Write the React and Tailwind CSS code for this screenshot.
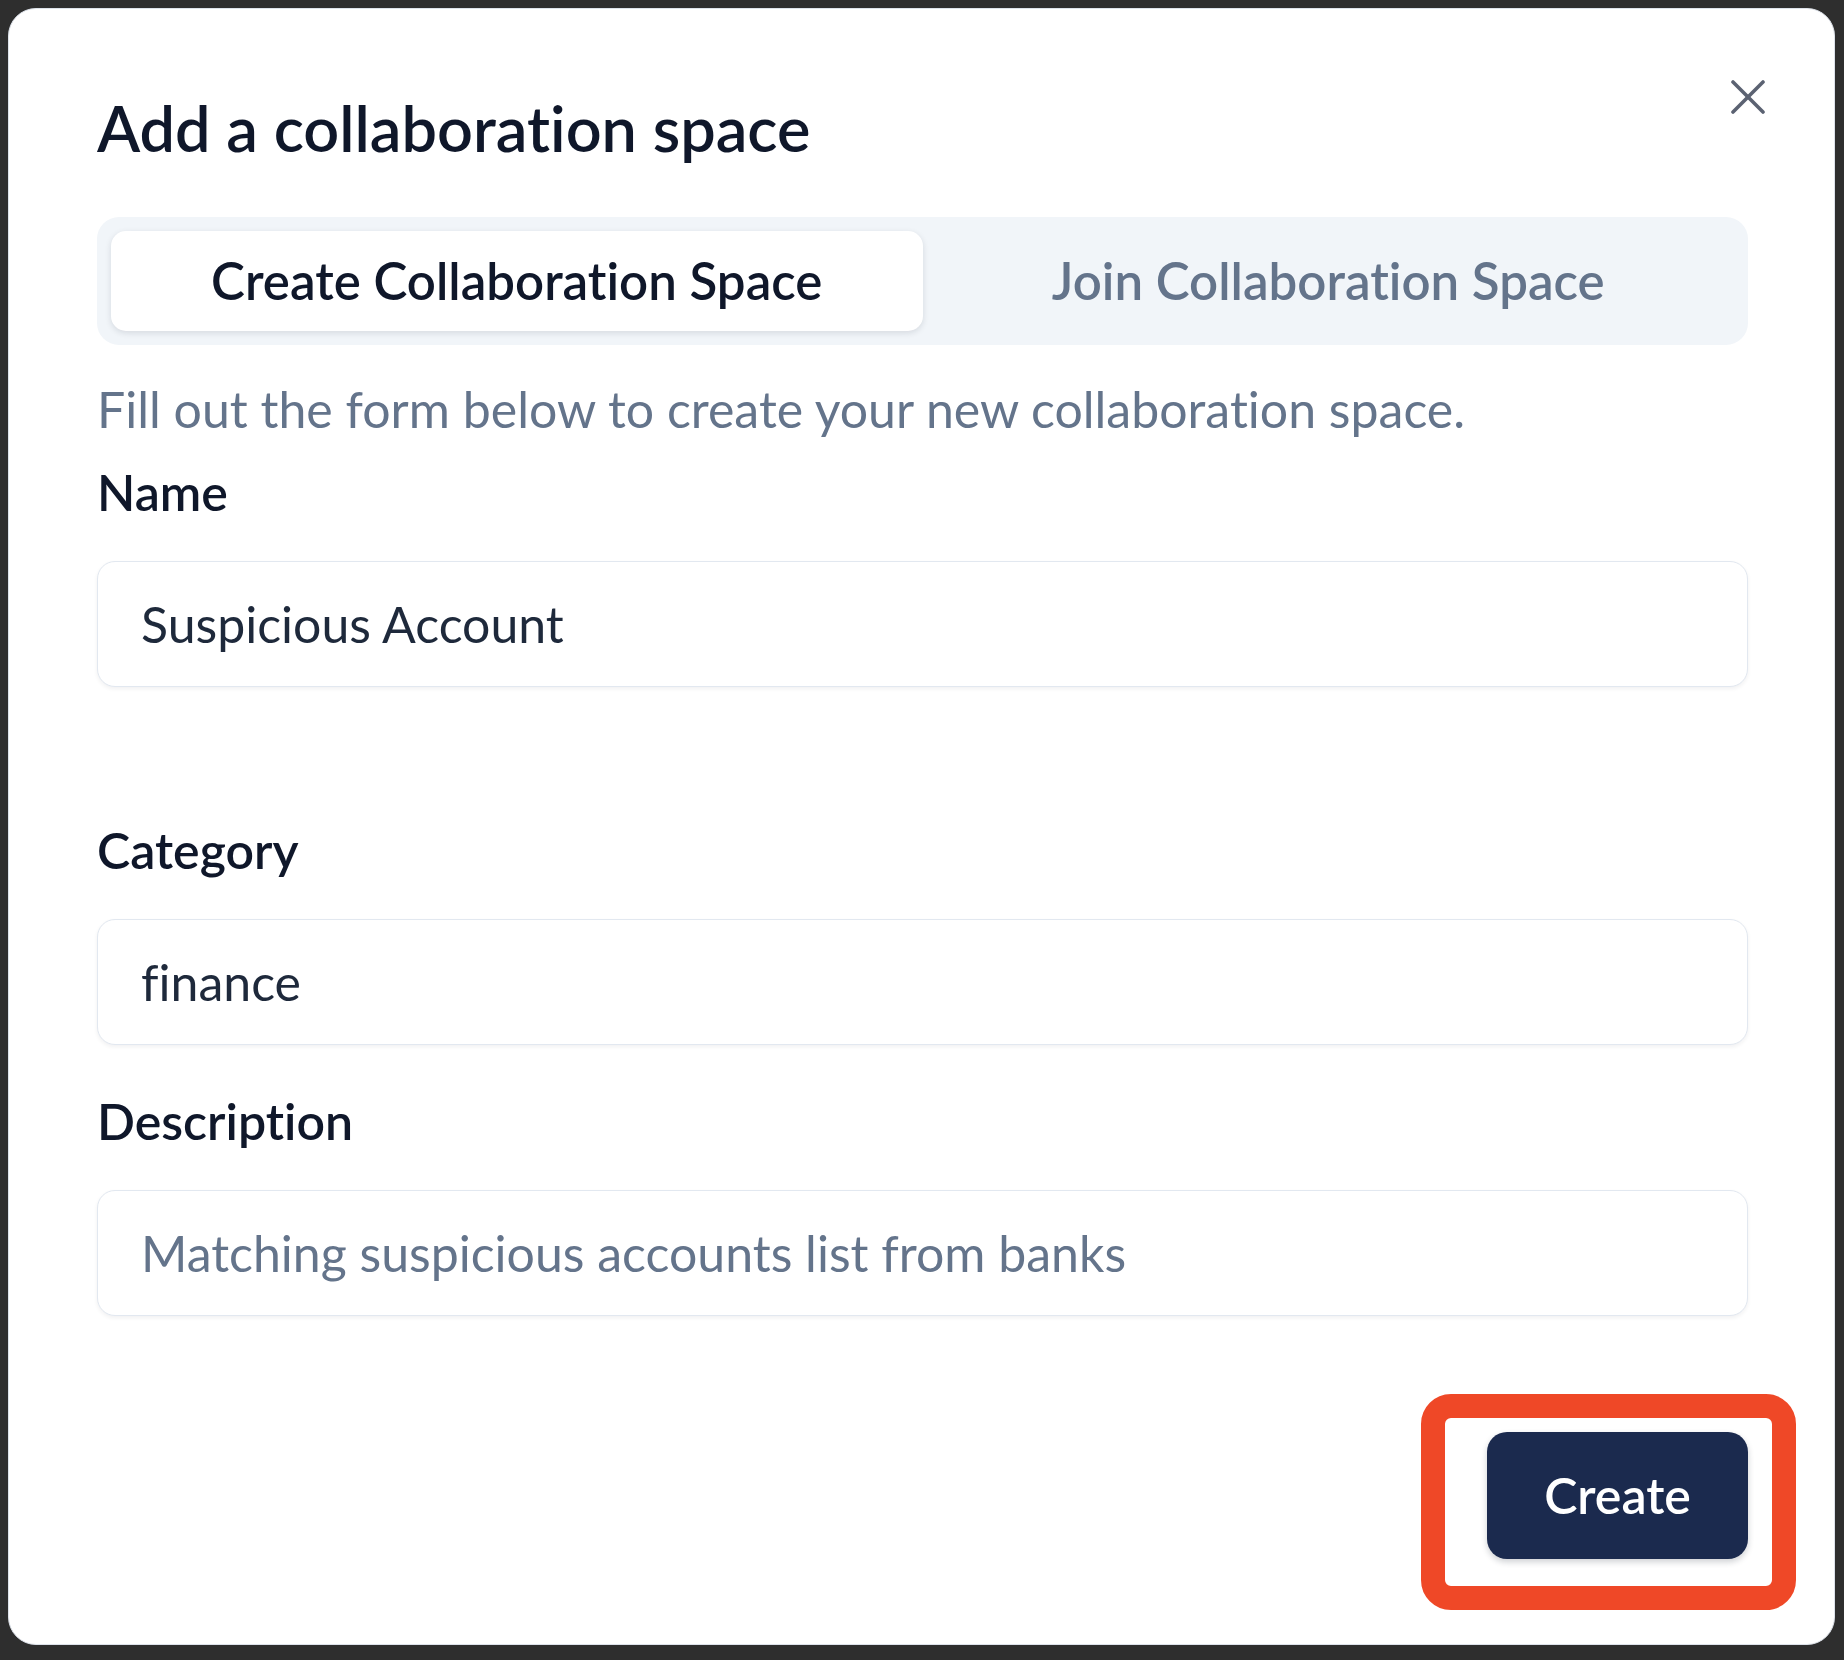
import { useState } from 'react';

const CloseIcon = () => (
  <svg width="34" height="34" viewBox="0 0 34 34" fill="none" stroke="currentColor" strokeWidth="3.6" strokeLinecap="round">
    <line x1="2" y1="2" x2="32" y2="32" />
    <line x1="32" y1="2" x2="2" y2="32" />
  </svg>
);

const Field = ({ label, value, placeholder, onChange, className = '' }) => (
  <div className={className}>
    <label className="block text-[50px] leading-[60px] font-semibold text-[#0f172a]">{label}</label>
    <input
      type="text"
      value={value}
      placeholder={placeholder}
      onChange={onChange}
      className="mt-[39px] block w-full h-[126px] pl-[43px] pr-[43px] rounded-[18px] border border-[#e2e8f0] bg-white text-[50px] text-[#1e293b] placeholder:text-[#64748b] shadow-[0_2px_4px_rgba(15,23,42,0.06)] focus:outline-none"
    />
  </div>
);

const App = () => {
  const [tab, setTab] = useState('create');
  const [formData, setFormData] = useState({
    name: 'Suspicious Account',
    category: 'finance',
    description: ''
  });

  const update = (key) => (e) => setFormData({ ...formData, [key]: e.target.value });

  return (
    <div className="min-h-[1660px] bg-[#2e2e2e] pt-[8px] pl-[8px] font-['Lato',sans-serif] [font-variant-ligatures:none]">
      <div className="relative w-[1827px] h-[1637px] rounded-[28px] border border-[#dde2ea] bg-white pl-[88px] pr-[86px] pt-[80px]">
        <button type="button" className="absolute top-[71px] right-[69px] text-[#5b6272]">
          <CloseIcon />
        </button>

        <h1 className="text-[63px] leading-[77px] font-semibold text-[#0f172a]">Add a collaboration space</h1>

        <div className="mt-[51px] grid grid-cols-2 p-[14px] rounded-[22px] bg-[#f1f5f9]">
          <button
            type="button"
            onClick={() => setTab('create')}
            className={`h-[100px] rounded-[15px] text-[51px] font-semibold ${tab === 'create' ? 'bg-white text-[#0f172a] shadow-[0_2px_6px_rgba(15,23,42,0.12)]' : 'text-[#64748b]'}`}
          >
            Create Collaboration Space
          </button>
          <button
            type="button"
            onClick={() => setTab('join')}
            className={`h-[100px] rounded-[15px] text-[51px] font-semibold ${tab === 'join' ? 'bg-white text-[#0f172a] shadow-[0_2px_6px_rgba(15,23,42,0.12)]' : 'text-[#64748b]'}`}
          >
            Join Collaboration Space
          </button>
        </div>

        <p className="mt-[33px] text-[50px] leading-[62px] text-[#64748b]">
          Fill out the form below to create your new collaboration space.
        </p>

        <Field className="mt-[22px]" label="Name" value={formData.name} onChange={update('name')} />
        <Field className="mt-[133px]" label="Category" value={formData.category} onChange={update('category')} />
        <Field
          className="mt-[46px]"
          label="Description"
          value={formData.description}
          placeholder="Matching suspicious accounts list from banks"
          onChange={update('description')}
        />

        <div className="mt-[116px] flex justify-end">
          <div className="relative">
            <button
              type="button"
              className="w-[261px] h-[127px] rounded-[20px] bg-[#1b2a4e] text-[50px] font-semibold text-white shadow-[0_3px_6px_rgba(15,23,42,0.2)]"
            >
              Create
            </button>
            <div className="absolute -left-[66px] -right-[48px] -top-[38px] -bottom-[51px] rounded-[30px] border-[24px] border-[#ef4827] pointer-events-none" />
          </div>
        </div>
      </div>
    </div>
  );
};

export default App;
